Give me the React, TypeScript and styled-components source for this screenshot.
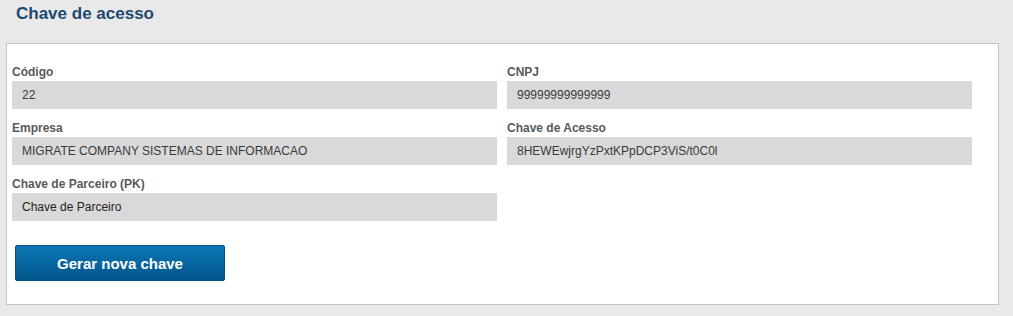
import styled, { createGlobalStyle } from "styled-components";

const GlobalStyle = createGlobalStyle`
    html, body {
        margin: 0;
        padding: 0;
        background: #e9e9e9;
        font-family: "Liberation Sans", Arial, sans-serif;
    }
`;

type Field = { label: string; value: string; placeholder?: boolean };

const leftFields: Field[] = [
    { label: "Código", value: "22" },
    { label: "Empresa", value: "MIGRATE COMPANY SISTEMAS DE INFORMACAO" },
    { label: "Chave de Parceiro (PK)", value: "Chave de Parceiro", placeholder: true },
];

const rightFields: Field[] = [
    { label: "CNPJ", value: "99999999999999" },
    { label: "Chave de Acesso", value: "8HEWEwjrgYzPxtKPpDCP3ViS/t0C0l" },
];

const FieldBlock = ({ label, value, placeholder }: Field) => (
    <FieldRoot>
        <Label>{label}</Label>
        <Input $placeholder={placeholder}>{value}</Input>
    </FieldRoot>
);

export default function App() {
    return (
        <Root>
            <GlobalStyle />
            <Title>Chave de acesso</Title>
            <Panel>
                <Columns>
                    <Column $width={485}>
                        {leftFields.map((f) => (
                            <FieldBlock key={f.label} {...f} />
                        ))}
                    </Column>
                    <Column $width={465}>
                        {rightFields.map((f) => (
                            <FieldBlock key={f.label} {...f} />
                        ))}
                    </Column>
                </Columns>
                <Button>Gerar nova chave</Button>
            </Panel>
        </Root>
    );
}

const Root = styled.div`
    width: 1013px;
    height: 316px;
    overflow: hidden;
`;

const Title = styled.h1`
    margin: 0;
    height: 43px;
    padding: 5px 0 0 16px;
    box-sizing: border-box;
    font-size: 17px;
    line-height: 18px;
    font-weight: 700;
    color: #1c4a70;
`;

const Panel = styled.div`
    margin: 0 14px 0 6px;
    height: 262px;
    box-sizing: border-box;
    background: #ffffff;
    border: 1px solid #c4c4c4;
    padding: 20px 0 0 5px;
    display: flex;
    flex-direction: column;
`;

const Columns = styled.div`
    display: flex;
    gap: 10px;
    align-items: flex-start;
`;

const Column = styled.div<{ $width: number }>`
    width: ${({ $width }) => $width}px;
    display: flex;
    flex-direction: column;
    gap: 11px;
`;

const FieldRoot = styled.div`
    display: flex;
    flex-direction: column;
`;

const Label = styled.label`
    font-size: 12px;
    line-height: 16px;
    font-weight: 700;
    color: #595959;
    margin-bottom: 1px;
`;

const Input = styled.div<{ $placeholder?: boolean }>`
    height: 28px;
    box-sizing: border-box;
    background: #d9d9d9;
    padding-left: 10px;
    display: flex;
    align-items: center;
    font-size: 12px;
    color: ${({ $placeholder }) => ($placeholder ? "#222222" : "#3a3a3a")};
`;

const Button = styled.button`
    margin: 24px 0 0 3px;
    width: 210px;
    height: 36px;
    border: 1px solid #04507e;
    border-radius: 2px;
    background: linear-gradient(to bottom, #0c76b2 0%, #0666a0 50%, #03568a 100%);
    color: #ffffff;
    font-family: "Liberation Sans", Arial, sans-serif;
    font-size: 15px;
    font-weight: 700;
    padding: 0;
    cursor: pointer;
`;
